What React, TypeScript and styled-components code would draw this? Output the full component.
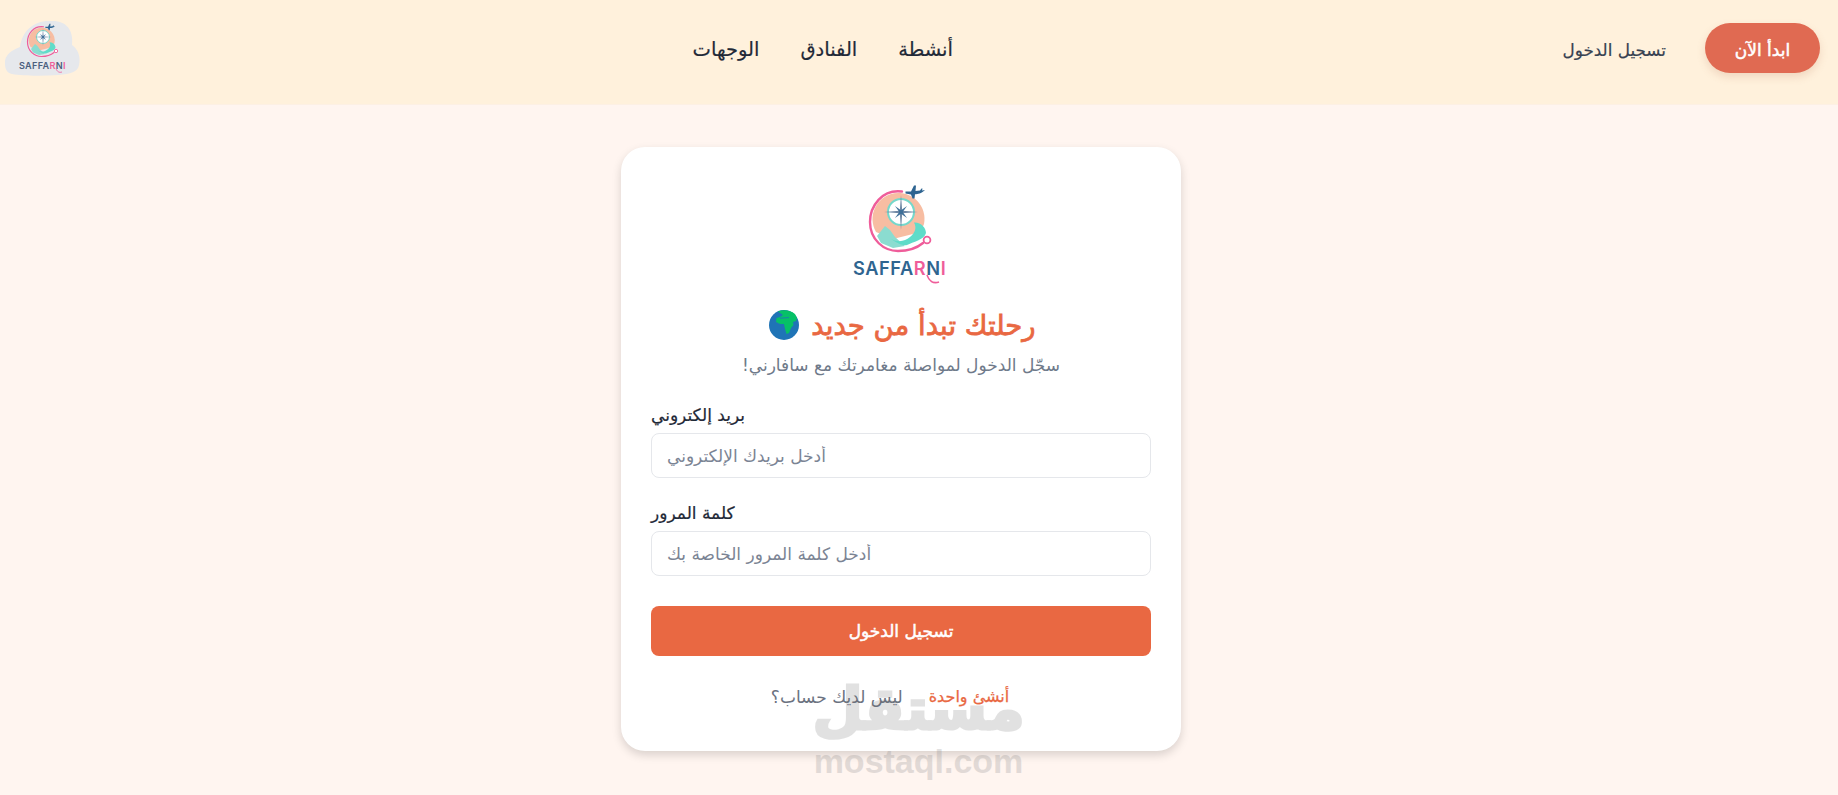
import React from "react";
import styled, { createGlobalStyle } from "styled-components";

const Global = createGlobalStyle`
  html, body { margin: 0; padding: 0; background: #fff5f0; }
  body { font-family: "DejaVu Sans", "Noto Sans", sans-serif; height: 795px; overflow: hidden; }
  * { box-sizing: border-box; }
`;

const Page = styled.div`
  position: relative;
  height: 795px;
  background: #fff5f0;
`;

const Header = styled.header`
  height: 105px;
  background: #fff1dc;
  border-bottom: 1px solid #fdf0e4;
  display: flex;
  align-items: center;
  justify-content: space-between;
  padding: 0 18px 8px 3px;
`;

const HeaderLogo = styled.div`
  display: flex;
  margin-top: 8px;
`;

const Nav = styled.nav`
  display: flex;
  align-items: center;
  gap: 41px;
  padding-top: 2px;
`;

const NavLink = styled.a`
  font-size: 19.5px;
  color: #1f2937;
  -webkit-text-stroke: 0.2px #1f2937;
`;

const Actions = styled.div`
  display: flex;
  align-items: center;
  gap: 39px;
`;

const LoginLink = styled.a`
  font-size: 16.8px;
  padding-top: 3px;
  color: #374151;
  -webkit-text-stroke: 0.2px #374151;
`;

const StartButton = styled.button`
  width: 115px;
  height: 50px;
  border: 0;
  border-radius: 25px;
  padding: 3px 0 0;
  background: #e06a52;
  color: #fff;
  font: 400 17px "DejaVu Sans", sans-serif;
  -webkit-text-stroke: 0.5px #fff;
  box-shadow: 0 4px 8px rgba(180, 110, 80, 0.2);
`;

const Main = styled.main`
  display: flex;
  justify-content: center;
  padding: 42px 36px 0 0;
`;

const Card = styled.section`
  width: 560px;
  height: 604px;
  background: #fff;
  border-radius: 24px;
  box-shadow: 0 4px 10px rgba(0, 0, 0, 0.15);
  padding: 23px 30px 0;
  display: flex;
  flex-direction: column;
`;

const Center = styled.div`
  display: flex;
  flex-direction: column;
  align-items: center;
`;

const Title = styled.h1`
  margin: 15px 0 0;
  padding-left: 3px;
  display: flex;
  align-items: center;
  gap: 12px;
  font-size: 27.5px;
  line-height: 40px;
  font-weight: 400;
  color: #e96842;
  -webkit-text-stroke: 0.8px #e96842;
`;

const Subtitle = styled.p`
  margin: 6px 0 0;
  font-size: 17px;
  line-height: 28px;
  color: #6f7a8a;
`;

const Form = styled.form`
  margin-top: 23px;
  display: flex;
  flex-direction: column;
`;

const Field = styled.div`
  display: flex;
  flex-direction: column;
  margin-bottom: 22px;
`;

const Label = styled.label`
  font-size: 17px;
  line-height: 26px;
  color: #1f2937;
  -webkit-text-stroke: 0.2px #1f2937;
  margin-bottom: 5px;
`;

const Input = styled.input`
  width: 500px;
  height: 45px;
  border: 1px solid #e5e7eb;
  border-radius: 8px;
  padding: 0 15px;
  font: 400 17px "DejaVu Sans", sans-serif;
  background: #fff;
  &::placeholder { color: #7b8494; opacity: 1; }
`;

const Submit = styled.button`
  height: 50px;
  margin-top: 8px;
  border: 0;
  border-radius: 8px;
  background: #e96842;
  color: #fff;
  font: 400 17px "DejaVu Sans", sans-serif;
  -webkit-text-stroke: 0.5px #fff;
`;

const Footer = styled.div`
  margin-top: 28px;
  padding-right: 22px;
  display: flex;
  justify-content: center;
  gap: 26px;
  font-size: 17px;
  line-height: 26px;
  color: #6b7280;
`;

const CreateLink = styled.a`
  color: #e96842;
  font-size: 16px;
  -webkit-text-stroke: 0.25px #e96842;
`;

const Watermark = styled.div`
  position: absolute;
  left: 815px;
  top: 676px;
  width: 207px;
  display: flex;
  flex-direction: column;
  align-items: center;
  color: #707070;
  opacity: 0.2;
  pointer-events: none;
`;

const WatermarkArabic = styled.div`
  font: 700 58px/67px "DejaVu Sans", sans-serif;
  -webkit-text-stroke: 3px #707070;
`;

const WatermarkLatin = styled.div`
  font: 700 34px/36px "Liberation Sans", sans-serif;
`;

const LOGO_FONT = "Inter, Lato, sans-serif";

const Logo = ({ small }: { small?: boolean }) => (
  <svg width={small ? 80 : 160} height={small ? 72 : 120} viewBox={small ? "0 0 160 144" : "0 0 160 120"}>
    {small && (
      <path
        d="M4 96C2 78 18 68 34 62C38 30 62 8 96 10C124 8 142 26 138 58C150 66 156 82 152 98C150 112 134 116 112 118C78 120 40 120 18 116C8 114 4 106 4 96Z"
        fill="#e6e8ec"
      />
    )}
    <path d="M55 62A26 26 0 1 1 103 54C101 60 96 63 88 65L72 69Z" fill="#f7bda2" />
    <path d="M56 66L64 56L69 60L74 67L84 76L72 78L60 73Z" fill="#8bdcd0" />
    <path
      d="M70 69C78 73 84 71 89 67C94 63 96 58 93 52.5C100 52 105 58 105 63C103 70 92 72 86 75C82 76 76 73 70 69Z"
      fill="#5fdcc9"
    />
    <circle cx="80" cy="42" r="13" fill="#fff" stroke="#74d8cb" strokeWidth="2" />
    <path d="M80 25L81.2 40.8L97 42L81.2 43.2L80 60L78.8 43.2L63 42L78.8 40.8Z" fill="#6d86a3" />
    <path d="M74 36L81 41L86 48L79 43Z" fill="#3f7099" />
    <path d="M86 36L81 43L74 48L79 41Z" fill="#3f7099" />
    <path
      d="M81 21.5C61 19 49 36 49 52C49 70 63 81 77 81C87 81 96 78 102 73"
      fill="none"
      stroke="#ef5d9a"
      strokeWidth="2.4"
      strokeLinecap="round"
    />
    <circle cx="106" cy="70" r="3.4" fill="#fff" stroke="#ef5d9a" strokeWidth="1.8" />
    <path
      d="M84.5 21.5L90 21.5L93 15.5L95 15.5L94.5 21L99 20.5L100.5 18.5L101.5 18.5L101 20.5L104 20C100 24 97 24 94 24.2L93.5 28.5L91.5 28.5L90 24.5L84.5 23.5Z"
      fill="#2e6491"
    />
    <text x="32" y="105" fontFamily={LOGO_FONT} fontWeight="600" fontSize="18.2" letterSpacing="0.6" fill={small ? "#4b5f7e" : "#2f6590"}>
      SAFFA<tspan fill="#ef5d9a">R</tspan>N<tspan fill="#ef5d9a">I</tspan>
    </text>
    <path d="M106 105C108 111 112 114 118 112" fill="none" stroke="#ef5d9a" strokeWidth="1.6" />
  </svg>
);

const Globe = () => (
  <svg width="30" height="30" viewBox="0 0 30 30">
    <circle cx="15" cy="15" r="15" fill="#1f74b6" />
    <path
      d="M9 1.4C14 -0.6 21 -0.2 26 4L28 8L27 11L24 12L24.5 15L22 18L20 23L17.5 24L16 19L15 14L11 14L7 12L7.5 8L11 7L14 5Z"
      fill="#06c167"
    />
    <path d="M11 8.2L20 7.6" stroke="#1f74b6" strokeWidth="0.9" fill="none" />
  </svg>
);

export default function App() {
  return (
    <Page>
      <Global />
      <Header>
        <HeaderLogo>
          <Logo small />
        </HeaderLogo>
        <Nav>
          <NavLink>الوجهات</NavLink>
          <NavLink>الفنادق</NavLink>
          <NavLink>أنشطة</NavLink>
        </Nav>
        <Actions>
          <LoginLink>تسجيل الدخول</LoginLink>
          <StartButton>ابدأ الآن</StartButton>
        </Actions>
      </Header>
      <Main>
        <Card>
          <Center>
            <Logo />
            <Title>
              <Globe />
              <span>رحلتك تبدأ من جديد</span>
            </Title>
            <Subtitle dir="rtl">سجّل الدخول لمواصلة مغامرتك مع سافارني!</Subtitle>
          </Center>
          <Form>
            <Field>
              <Label>بريد إلكتروني</Label>
              <Input placeholder="أدخل بريدك الإلكتروني" />
            </Field>
            <Field>
              <Label>كلمة المرور</Label>
              <Input placeholder="أدخل كلمة المرور الخاصة بك" />
            </Field>
            <Submit type="button">تسجيل الدخول</Submit>
          </Form>
          <Footer>
            <span>ليس لديك حساب؟</span>
            <CreateLink>أنشئ واحدة</CreateLink>
          </Footer>
        </Card>
      </Main>
      <Watermark>
        <WatermarkArabic>مستقل</WatermarkArabic>
        <WatermarkLatin>mostaql.com</WatermarkLatin>
      </Watermark>
    </Page>
  );
}
